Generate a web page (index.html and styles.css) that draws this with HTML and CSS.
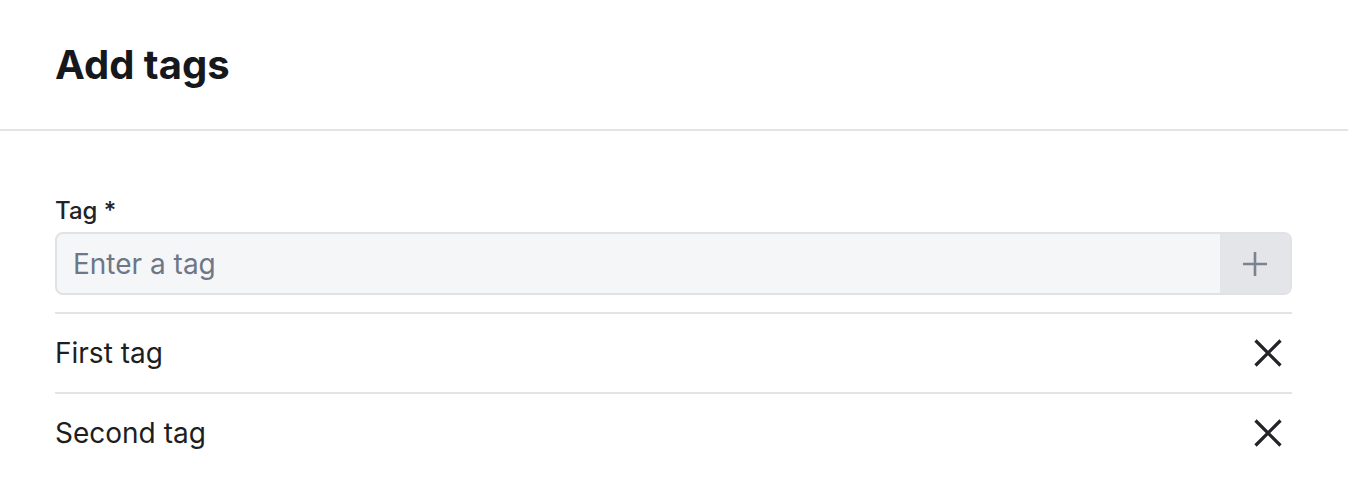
FILE: index.html
```html
<!DOCTYPE html>
<html lang="en">
<head>
    <meta charset="UTF-8">
    <meta name="viewport" content="width=device-width, initial-scale=1.0">
    <title>Add tags</title>
    <link rel="stylesheet" href="styles.css">
</head>
<body>
<div class="modal">
    <div class="header">
        <h2>Add tags</h2>
    </div>

    <div class="content">
        <label class="label" for="tag">Tag *</label>
        <div class="field">
            <input type="text" id="tag" placeholder="Enter a tag">
            <button class="add-btn" type="button" aria-label="Add">
                <svg width="30" height="30" viewBox="0 0 30 30">
                    <path d="M15 3v24M3 15h24" stroke="#7b8390" stroke-width="2.6" fill="none"/>
                </svg>
            </button>
        </div>

        <ul class="tags">
            <li>
                <span>First tag</span>
                <button class="remove" type="button" aria-label="Remove">
                    <svg width="32" height="32" viewBox="0 0 32 32">
                        <path d="M3.5 3.5l25 25M28.5 3.5l-25 25" stroke="#222428" stroke-width="3.2" fill="none"/>
                    </svg>
                </button>
            </li>
            <li>
                <span>Second tag</span>
                <button class="remove" type="button" aria-label="Remove">
                    <svg width="32" height="32" viewBox="0 0 32 32">
                        <path d="M3.5 3.5l25 25M28.5 3.5l-25 25" stroke="#222428" stroke-width="3.2" fill="none"/>
                    </svg>
                </button>
            </li>
        </ul>
    </div>
</div>
</body>
</html>
```

FILE: styles.css
```css
body {
    margin: 0;
    font-family: Inter, "Noto Sans", sans-serif;
    background: #ffffff;
    color: #1d1e22;
}

.header {
    height: 129px;
    display: flex;
    align-items: center;
    padding: 0 55px;
    border-bottom: 2px solid #e3e4e6;
}

.header h2 {
    margin: 0;
    font-size: 40px;
    font-weight: 700;
    color: #17181c;
}

.content {
    padding: 65px 56px 0 55px;
}

.label {
    display: block;
    font-size: 24px;
    font-weight: 500;
    color: #222328;
    margin-bottom: 7px;
}

.field {
    display: flex;
    height: 63px;
    border: 2px solid #e0e2e6;
    border-radius: 8px;
    background: #f5f6f8;
    box-sizing: border-box;
    overflow: hidden;
}

.field input {
    flex: 1;
    border: none;
    background: transparent;
    padding: 0 16px;
    font-family: inherit;
    font-size: 28px;
    color: #1d1e22;
    outline: none;
}

.field input::placeholder {
    color: #6e7787;
}

.add-btn {
    width: 70px;
    border: none;
    background: #e3e5e9;
    display: flex;
    align-items: center;
    justify-content: center;
    padding: 0;
}

.tags {
    list-style: none;
    margin: 17px 0 0;
    padding: 0;
}

.tags li {
    height: 80px;
    box-sizing: border-box;
    display: flex;
    align-items: center;
    justify-content: space-between;
    border-top: 2px solid #e3e4e6;
    font-size: 28px;
}

.remove {
    border: none;
    background: none;
    padding: 0;
    margin-right: 8px;
    display: flex;
}
```
